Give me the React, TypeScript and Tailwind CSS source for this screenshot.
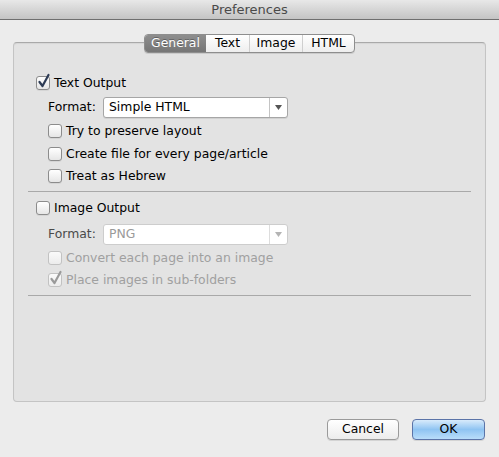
import React from "react";

const Check = ({ checked, disabled }: { checked?: boolean; disabled?: boolean }) => (
  <span className="relative inline-block w-[14px] h-[14px] shrink-0">
    <span
      className={`block w-[14px] h-[14px] rounded-[3px] border ${
        disabled
          ? "border-[#c2c2c2] bg-gradient-to-b from-[#fafafa] to-[#ececec]"
          : "border-[#8c8c8c] bg-gradient-to-b from-white to-[#e6e6e6] shadow-[0_1px_0_rgba(0,0,0,0.06)]"
      }`}
    />
    {checked && (
      <svg className="absolute left-[1px] top-[-3px]" width="14" height="16" viewBox="0 0 14 16">
        <path
          d="M2.5 9 L5.5 13 L11.5 2"
          fill="none"
          stroke={disabled ? "#9a9a9a" : "#2d3b55"}
          strokeWidth="2.2"
          strokeLinecap="round"
          strokeLinejoin="round"
        />
      </svg>
    )}
  </span>
);

const CheckRow = ({
  label,
  checked,
  disabled,
}: {
  label: string;
  checked?: boolean;
  disabled?: boolean;
}) => (
  <div className="flex items-center gap-[4px] h-[22px]">
    <Check checked={checked} disabled={disabled} />
    <span className={disabled ? "text-[#a0a0a0]" : "text-black"}>{label}</span>
  </div>
);

const Select = ({ value, disabled }: { value: string; disabled?: boolean }) => (
  <div
    className={`flex items-stretch w-[185px] h-[21px] bg-white border rounded-[3px] ${
      disabled ? "border-[#cdcdcd]" : "border-[#a6a6a6] shadow-[0_1px_0_rgba(0,0,0,0.08)]"
    }`}
  >
    <span className={`flex-1 flex items-center pl-[5px] ${disabled ? "text-[#9a9a9a]" : "text-black"}`}>
      {value}
    </span>
    <span
      className={`w-[18px] flex items-center justify-center border-l ${
        disabled ? "border-[#dddddd]" : "border-[#c4c4c4]"
      }`}
    >
      <svg width="7" height="5" viewBox="0 0 7 5">
        <path d="M0 0 L7 0 L3.5 5 Z" fill={disabled ? "#b4b4b4" : "#555"} />
      </svg>
    </span>
  </div>
);

const tabs = ["General", "Text", "Image", "HTML"];

const App = () => {
  return (
    <div
      className="w-[499px] h-[457px] bg-[#ececec] flex flex-col text-[12.4px] overflow-hidden"
      style={{ fontFamily: '"DejaVu Sans", "Liberation Sans", sans-serif' }}
    >
      <div className="h-[20px] shrink-0 flex items-center justify-center bg-gradient-to-b from-[#e8e8e8] to-[#c4c4c4] border-b border-[#6f6f6f] text-[#4a4a4a] text-[13px]">
        Preferences
      </div>

      <div className="flex justify-center mt-[14px] relative z-10">
        <div className="flex h-[19px] rounded-[4px] border border-[#8e8e8e] overflow-hidden bg-gradient-to-b from-white to-[#eeeeee] shadow-[0_1px_0_rgba(0,0,0,0.1)]">
          {tabs.map((t, i) => (
            <div
              key={t}
              className={`flex items-center justify-center ${
                i === 0
                  ? "w-[61px] bg-gradient-to-b from-[#8e8e8e] to-[#767676] text-white [text-shadow:0_-1px_0_rgba(0,0,0,0.3)]"
                  : i === 1
                  ? "w-[43px] text-black"
                  : i === 2
                  ? "w-[53px] text-black border-l border-[#cfcfcf]"
                  : "w-[52px] text-black border-l border-[#cfcfcf]"
              }`}
            >
              {t}
            </div>
          ))}
        </div>
      </div>

      <div className="mx-[13px] -mt-[11px] h-[360px] bg-[#e3e3e3] border border-[#c4c4c4] border-t-[#a9a9a9] rounded-[4px] shadow-[inset_0_1px_1px_rgba(0,0,0,0.06)] pt-[29px] px-[14px]">
        <div className="pl-[8px]">
          <CheckRow label="Text Output" checked />
          <div className="pl-[12px] flex flex-col">
            <div className="flex items-center gap-[9px] h-[25px] mt-[1px]">
              <span className="w-[46px]">Format:</span>
              <Select value="Simple HTML" />
            </div>
            <CheckRow label="Try to preserve layout" />
            <div className="mt-[1px]">
              <CheckRow label="Create file for every page/article" />
            </div>
            <CheckRow label="Treat as Hebrew" />
          </div>
        </div>

        <div className="h-px bg-[#a9a9a9] mt-[4px] mb-[5px]" />

        <div className="pl-[8px]">
          <CheckRow label="Image Output" />
          <div className="pl-[12px] flex flex-col">
            <div className="flex items-center gap-[9px] h-[26px] mt-[2px]">
              <span className="w-[46px] text-[#4a4a4a]">Format:</span>
              <Select value="PNG" disabled />
            </div>
            <CheckRow label="Convert each page into an image" disabled />
            <CheckRow label="Place images in sub-folders" checked disabled />
          </div>
        </div>

        <div className="h-px bg-[#a9a9a9] mt-[4px]" />
      </div>

      <div className="flex justify-end gap-[13px] mt-[17px] pr-[14px]">
        <button className="w-[72px] h-[21px] rounded-[4px] border border-[#9a9a9a] bg-gradient-to-b from-white to-[#ececec] shadow-[0_1px_0_rgba(0,0,0,0.1)] text-black">
          Cancel
        </button>
        <button className="w-[73px] h-[21px] rounded-[4px] border border-[#5b74a8] bg-gradient-to-b from-[#d8ebfb] via-[#8fc4f2] to-[#b9ddfa] shadow-[0_1px_0_rgba(0,0,0,0.1)] text-black">
          OK
        </button>
      </div>
    </div>
  );
};

export default App;
